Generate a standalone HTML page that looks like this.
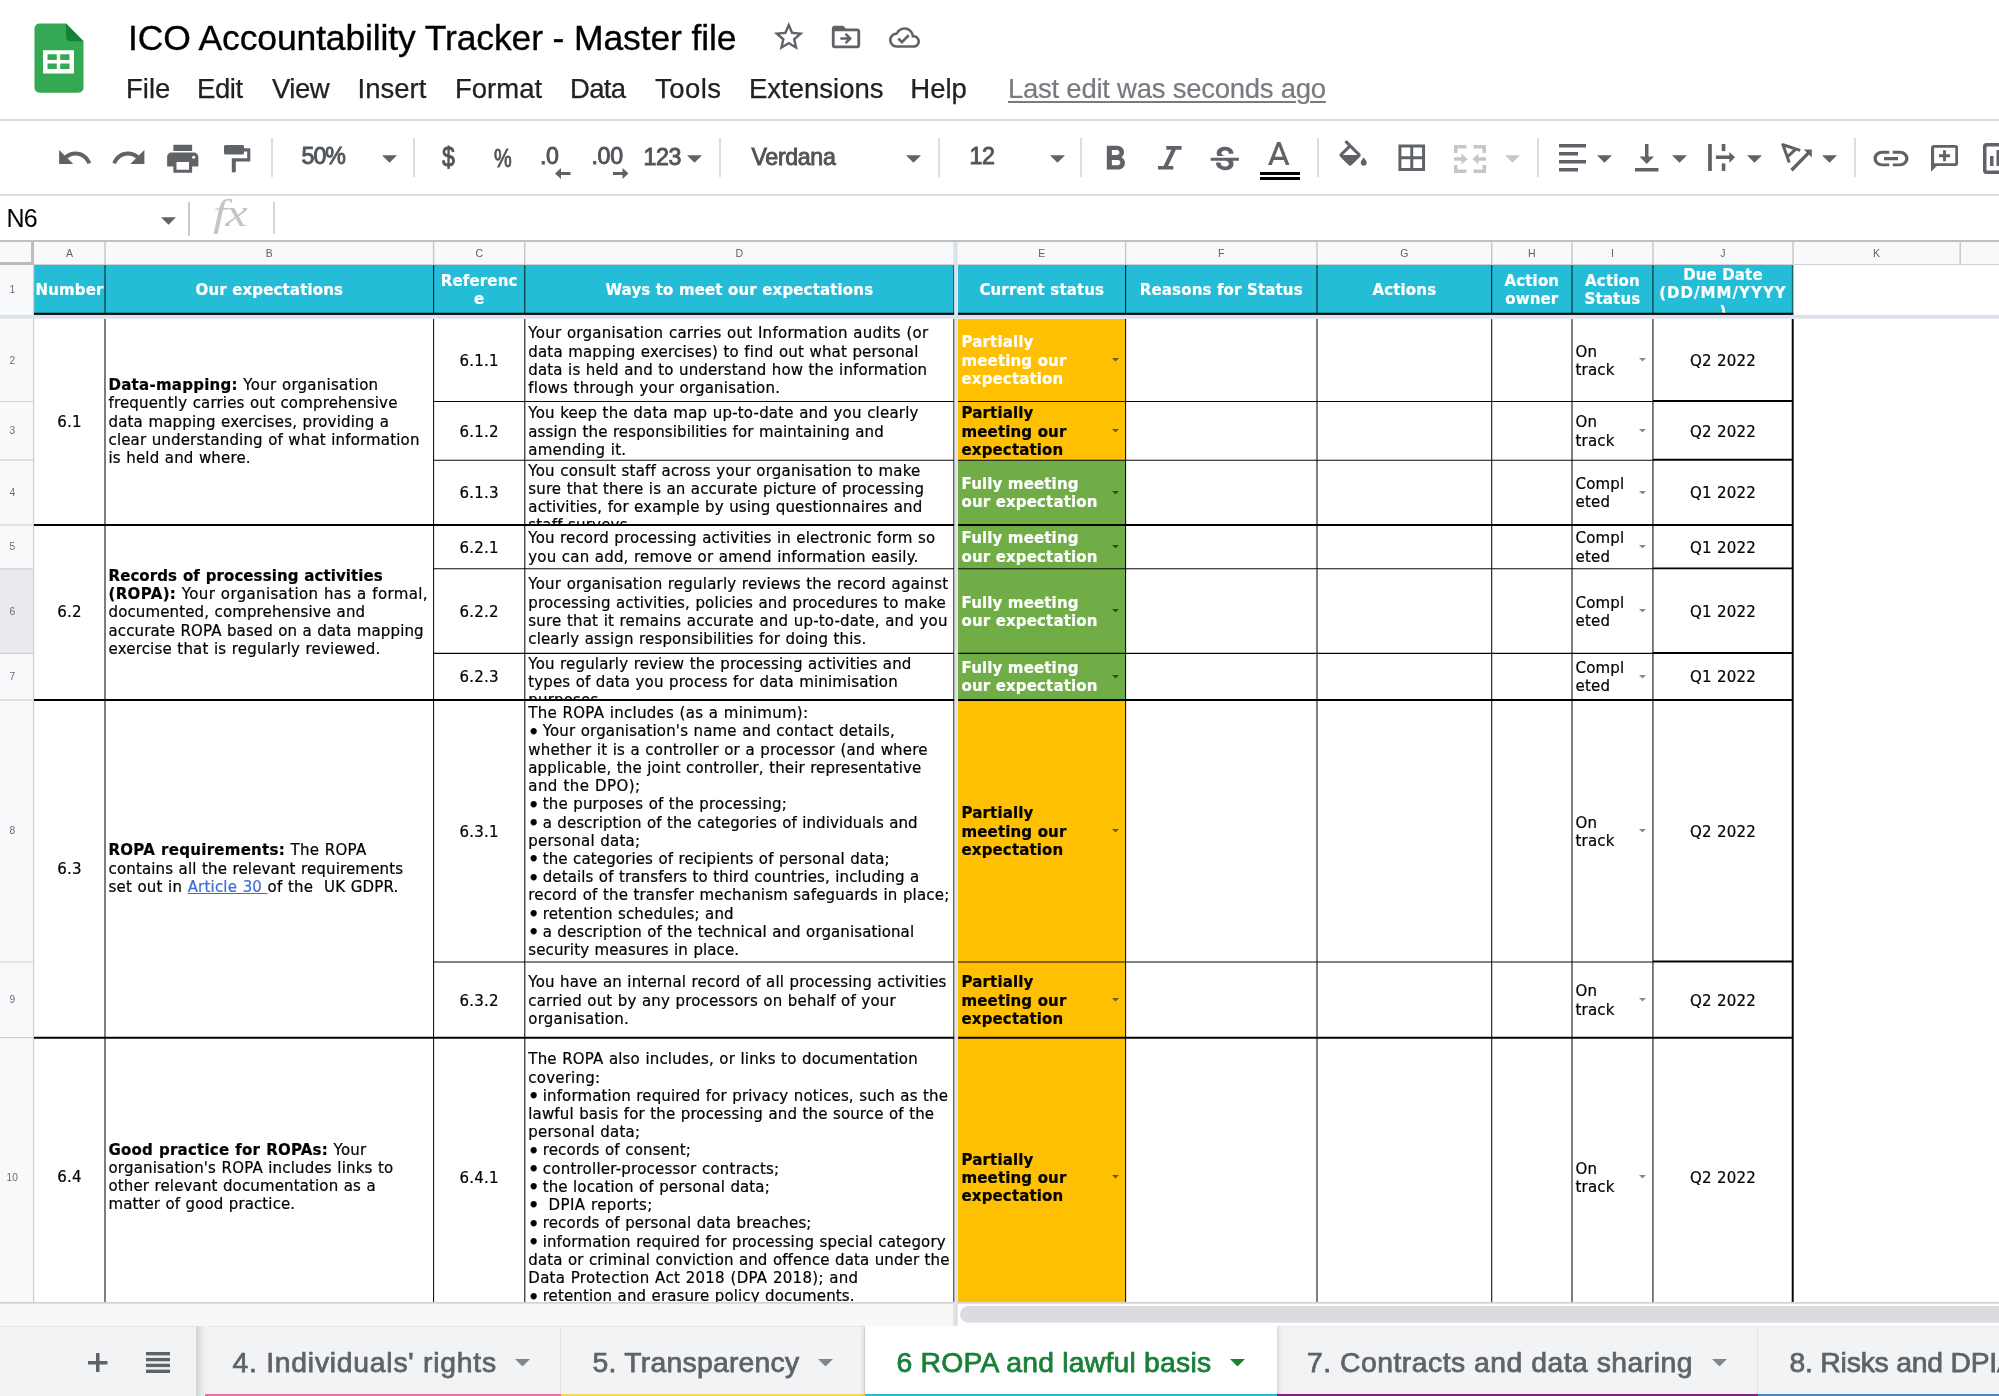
<!DOCTYPE html>
<html lang="en"><head><meta charset="utf-8"><title>ICO Accountability Tracker - Master file</title>
<style>
html,body{margin:0;padding:0}
body{width:1999px;height:1396px;position:relative;overflow:hidden;background:#fff;font-family:"Liberation Sans",sans-serif;color:#000}
div,span,svg{position:absolute;box-sizing:border-box}
.t{white-space:nowrap;line-height:1}
.cell{-webkit-text-stroke:0.22px currentColor;font-family:"DejaVu Sans","Liberation Sans",sans-serif;font-size:15px;line-height:18.23px;overflow:hidden;display:flex;align-items:center}
.cell>p{position:static;margin:0;padding:1.600px 0 0 0;width:100%;white-space:pre;letter-spacing:0.2px;word-spacing:0.3px}
.cell b{letter-spacing:0.15px;word-spacing:0}
.hd>p{letter-spacing:0.15px !important;word-spacing:0 !important}
.np>p{padding-top:0 !important}
.cell b{font-weight:bold}
.fl{word-spacing:0.5px}
.fl b{letter-spacing:inherit !important;word-spacing:inherit !important}
.bl{font-weight:bold;font-size:17px;line-height:10px;letter-spacing:-1.9px;position:relative !important;top:1.300px}
.cell span,.cell a{position:static}
.hd{color:#fff;font-weight:bold;text-align:center;background:#25bcd7}
.c{text-align:center}
.top{align-items:flex-start}
.ch{font-size:10.5px;color:#5f6368;text-align:center;line-height:22px;top:242px;height:22px}
.rh{font-size:10.2px;color:#6a6e73;text-align:center;left:0;width:24.500px;display:flex;align-items:center;justify-content:center}
.rh>span{position:static}
.menu{top:73px;font-size:27.5px;color:#202124;-webkit-text-stroke:0.25px #202124;line-height:32px;white-space:nowrap}
.tb{font-size:23.200px;letter-spacing:-0.350px;color:#50555a;white-space:nowrap;line-height:26px;-webkit-text-stroke:0.9px #50555a}
.sep{width:2px;background:#dadce0;top:138px;height:39px}
.tab{top:1327.200px;height:70px;font-size:28.300px;line-height:70px;white-space:nowrap;color:#5f6368;-webkit-text-stroke:0.75px #5f6368}
</style></head>
<body>
<div id="root" style="left:0;top:0;width:1999px;height:1396px;overflow:hidden;will-change:transform;opacity:0.999">
<svg style="left:33px;top:21.600px;width:52px;height:72.800px" viewBox="0 0 52 72" preserveAspectRatio="none">
<path d="M6.5 1.5H33L50.5 19V65a5 5 0 0 1-5 5H6.500a5 5 0 0 1-5-5V6.500a5 5 0 0 1 5-5z" fill="#34a853"/>
<path d="M33 1.500L50.5 19H37.500a4.500 4.500 0 0 1-4.500-4.500z" fill="#188038"/>
<path d="M10 28h31v23H10zM14.500 32v5.500h9.300V32zm12.700 0v5.500h9.300V32zM14.500 41v5.500h9.300V41zm12.700 0v5.500h9.300V41z" fill="#fff" fill-rule="evenodd"/>
</svg>
<div class="t" id="title" style="left:128px;top:18px;font-size:35.5px;line-height:40px;color:#000;letter-spacing:-0.13px;-webkit-text-stroke:0.35px #000">ICO Accountability Tracker - Master file</div>
<svg style="left:771px;top:19px;width:35.5px;height:35.5px" viewBox="0 0 24 24"><path fill="#5f6368" d="M22 9.24l-7.19-.62L12 2 9.190 8.630 2 9.240l5.460 4.730L5.820 21 12 17.270 18.180 21l-1.630-7.030L22 9.240zM12 15.400l-3.760 2.270 1-4.280-3.320-2.880 4.380-.38L12 6.100l1.710 4.040 4.380.38-3.320 2.880 1 4.280L12 15.400z"/></svg>
<svg style="left:829px;top:19.500px;width:34px;height:34px" viewBox="0 0 24 24"><path fill="#5f6368" d="M20 6h-8l-2-2H4c-1.100 0-2 .9-2 2v12c0 1.100.9 2 2 2h16c1.100 0 2-.9 2-2V8c0-1.100-.9-2-2-2zm0 12H4V8h16v10z"/><path fill="none" stroke="#5f6368" stroke-width="1.800" d="M8 13.050h6.800M11.700 9.800l3.250 3.250-3.250 3.250"/></svg>
<svg style="left:889px;top:21.5px;width:31px;height:31px" viewBox="0 0 24 24"><path fill="#5f6368" d="M19.350 10.040C18.670 6.590 15.640 4 12 4 9.110 4 6.600 5.640 5.350 8.040 2.340 8.360 0 10.910 0 14c0 3.310 2.690 6 6 6h13c2.760 0 5-2.240 5-5 0-2.640-2.050-4.780-4.650-4.960zM19 18H6c-2.210 0-4-1.790-4-4 0-2.050 1.530-3.760 3.560-3.970l1.070-.11.5-.95C8.080 7.140 9.940 6 12 6c2.620 0 4.880 1.860 5.390 4.430l.3 1.500 1.530.11c1.560.1 2.780 1.410 2.780 2.960 0 1.650-1.350 3-3 3zm-9-3.820l-2.090-2.090L6.500 13.500 10 17l6.010-6.010-1.410-1.410z"/></svg>
<div class="menu" id="m0" style="left:126px;letter-spacing:0px">File</div>
<div class="menu" id="m1" style="left:197px;letter-spacing:-0.4px">Edit</div>
<div class="menu" id="m2" style="left:272px;letter-spacing:-0.5px">View</div>
<div class="menu" id="m3" style="left:357.5px;letter-spacing:0px">Insert</div>
<div class="menu" id="m4" style="left:455px;letter-spacing:0px">Format</div>
<div class="menu" id="m5" style="left:570px;letter-spacing:-0.7px">Data</div>
<div class="menu" id="m6" style="left:655px;letter-spacing:0.45px">Tools</div>
<div class="menu" id="m7" style="left:749px;letter-spacing:0px">Extensions</div>
<div class="menu" id="m8" style="left:910.3px;letter-spacing:0px">Help</div>
<div class="menu" id="lastedit" style="left:1008px;color:#777b80;-webkit-text-stroke:0.2px #777b80;letter-spacing:-0.25px;text-decoration:underline #777b80;text-decoration-thickness:2px;text-underline-offset:3px">Last edit was seconds ago</div>
<div style="left:0;top:119px;width:1999px;height:2px;background:#dadce0"></div>
<div style="left:0;top:194px;width:1999px;height:2px;background:#dadce0"></div>
<svg style="left:55.5px;top:139px;width:37.5px;height:37.5px" viewBox="0 0 24 24"><path fill="#5f6368" d="M12.500 8c-2.650 0-5.050.99-6.900 2.600L2 7v9h9l-3.620-3.620c1.390-1.160 3.160-1.880 5.120-1.880 3.540 0 6.550 2.310 7.600 5.500l2.370-.78C21.080 11.030 17.150 8 12.500 8z"/></svg>
<svg style="left:109.8px;top:139px;width:37.5px;height:37.5px" viewBox="0 0 24 24"><path fill="#5f6368" d="M18.400 10.600C16.550 8.990 14.150 8 11.500 8c-4.650 0-8.580 3.030-9.960 7.220L3.900 16c1.050-3.190 4.050-5.500 7.600-5.500 1.950 0 3.730.72 5.120 1.880L13 16h9V7l-3.600 3.600z"/></svg>
<svg style="left:163.5px;top:139.5px;width:37.5px;height:37.5px" viewBox="0 0 24 24"><path fill="#5f6368" d="M19 8H5c-1.660 0-3 1.340-3 3v6h4v4h12v-4h4v-6c0-1.660-1.340-3-3-3zm-3 11H8v-5h8v5zm3-7c-.55 0-1-.45-1-1s.45-1 1-1 1 .45 1 1-.45 1-1 1zm-1-9H6v4h12V3z"/></svg>
<svg style="left:224px;top:145px;width:26.500px;height:27.500px" viewBox="0 0 26.500 27.500"><path fill="#5f6368" d="M1.500 0h17a1.500 1.500 0 0 1 1.500 1.500v1.800h6.300v13.200H11.800v9.500a1.500 1.500 0 0 1-1.500 1.500h-1a1.500 1.500 0 0 1-1.500-1.500V13.300h15.400V6.500H20v1.500a1.500 1.500 0 0 1-1.500 1.500h-17a1.500 1.500 0 0 1-1.500-1.500v-6.500a1.500 1.500 0 0 1 1.500-1.500z"/></svg>
<div class="sep" style="left:270.5px"></div>
<div class="tb" id="zoom" style="left:301.500px;top:143.300px;letter-spacing:-1px">50%</div>
<svg style="left:382px;top:155.2px;width:15px;height:8px" viewBox="0 0 10 5"><path d="M0 0h10L5 5z" fill="#5f6368"/></svg>
<div class="sep" style="left:412.5px"></div>
<div class="tb" id="dollar" style="left:441.500px;top:143.500px;font-size:27.500px;transform:scaleX(0.84);transform-origin:0 0">$</div>
<div class="tb" id="pct" style="left:494.300px;top:144.800px;font-size:25.500px;transform:scaleX(0.78);transform-origin:0 0">%</div>
<div class="tb" id="d0" style="left:540px;top:143px">.0</div>
<svg style="left:555px;top:167.500px;width:15.500px;height:11px" viewBox="0 0 15.500 11"><path d="M15.500 4H6V0L0 5.500 6 11V7h9.500z" fill="#5f6368"/></svg>
<div class="tb" id="d00" style="left:591.500px;top:143px">.00</div>
<svg style="left:612.500px;top:167.500px;width:15.500px;height:11px" viewBox="0 0 15.500 11"><path d="M0 4H9.500V0l6 5.500-6 5.500V7H0z" fill="#5f6368"/></svg>
<div class="tb" id="n123" style="left:643.500px;top:143.500px">123</div>
<svg style="left:687px;top:155.2px;width:15px;height:8px" viewBox="0 0 10 5"><path d="M0 0h10L5 5z" fill="#5f6368"/></svg>
<div class="sep" style="left:719px"></div>
<div class="tb" id="verdana" style="left:751.500px;top:143.500px">Verdana</div>
<svg style="left:905.5px;top:155.2px;width:15px;height:8px" viewBox="0 0 10 5"><path d="M0 0h10L5 5z" fill="#5f6368"/></svg>
<div class="sep" style="left:938px"></div>
<div class="tb" id="n12" style="left:969.500px;top:142.500px">12</div>
<svg style="left:1049.5px;top:155.2px;width:15px;height:8px" viewBox="0 0 10 5"><path d="M0 0h10L5 5z" fill="#5f6368"/></svg>
<div class="sep" style="left:1080px"></div>
<svg style="left:1095.2px;top:139.26px;width:40.5px;height:40.5px" viewBox="0 0 24 24"><path fill="#5f6368" d="M15.600 10.790c.97-.67 1.650-1.770 1.650-2.790 0-2.260-1.750-4-4-4H7v14h7.040c2.090 0 3.710-1.700 3.710-3.790 0-1.520-.86-2.820-2.150-3.420zM10 6.500h3c.83 0 1.500.67 1.500 1.500s-.67 1.500-1.500 1.500h-3v-3zm3.500 9H10v-3h3.500c.83 0 1.500.67 1.500 1.500s-.67 1.500-1.500 1.500z"/></svg>
<svg style="left:1158.400px;top:146px;width:23.600px;height:23.600px" viewBox="0 0 23.600 23.600"><path fill="#5f6368" d="M8.300 0H23.600V3.700H17.900L10.100 19.900H15.300V23.600H0V19.900H5.600L13.400 3.700H8.300z"/></svg>
<svg style="left:1205.5px;top:142.4px;width:37.5px;height:37.5px" viewBox="0 0 24 24"><path fill="#5f6368" d="M7.240 8.750c-.26-.48-.39-1.030-.39-1.670 0-.61.13-1.160.4-1.670.26-.5.630-.93 1.110-1.290.48-.35 1.050-.63 1.700-.83.660-.19 1.390-.29 2.180-.29.810 0 1.540.11 2.210.34.660.22 1.230.54 1.690.94.470.4.830.88 1.080 1.430.25.550.38 1.150.38 1.810h-3.010c0-.31-.05-.59-.15-.85-.09-.27-.24-.49-.44-.68-.2-.19-.45-.33-.75-.44-.3-.1-.66-.16-1.060-.16-.39 0-.74.040-1.030.13-.29.090-.53.210-.72.360-.19.160-.34.340-.44.550-.1.210-.15.430-.15.660 0 .48.250.88.740 1.210.38.250.77.480 1.410.7H7.390c-.05-.08-.11-.17-.15-.25zM21 12v-2H3v2h9.620c.18.070.4.140.55.200.37.170.66.340.87.510.21.170.35.360.43.570.07.200.11.430.11.690 0 .23-.05.450-.14.660-.09.200-.23.380-.42.530-.19.150-.42.260-.71.350-.29.080-.63.130-1.010.13-.43 0-.83-.04-1.180-.13s-.66-.23-.91-.42c-.25-.19-.45-.44-.59-.75-.14-.31-.25-.76-.25-1.210H6.400c0 .55.080 1.130.24 1.580.16.450.37.850.65 1.210.28.350.6.660.98.920.37.260.78.480 1.220.65.440.17.900.3 1.380.39.480.08.960.13 1.440.13.800 0 1.530-.09 2.180-.28s1.210-.45 1.670-.79c.46-.34.820-.77 1.070-1.270s.38-1.070.38-1.710c0-.6-.1-1.140-.31-1.610-.05-.11-.11-.23-.17-.33H21z"/></svg>
<svg style="left:1258.9px;top:137.1px;width:39.6px;height:39.6px" viewBox="0 0 24 24"><path fill="#5f6368" d="M11 3L5.500 17h2.250l1.120-3h6.250l1.120 3h2.250L13 3h-2zm-1.380 9L12 5.670 14.380 12H9.620z"/></svg>
<div style="left:1259.500px;top:172.300px;width:40.500px;height:8px;background:#000"></div>
<div style="left:1259.500px;top:175.400px;width:40.500px;height:1.800px;background:#fff"></div>
<div class="sep" style="left:1316.5px"></div>
<svg style="left:1335.4px;top:140px;width:36.3px;height:36.3px" viewBox="0 0 24 24"><path fill="#5f6368" d="M16.560 8.940L7.620 0 6.210 1.410l2.380 2.380-5.150 5.150c-.59.590-.59 1.540 0 2.120l5.500 5.500c.29.290.68.440 1.060.44s.77-.15 1.060-.44l5.500-5.500c.59-.58.590-1.530 0-2.120zM5.210 10L10 5.210 14.790 10H5.210zM19 11.500s-2 2.170-2 3.500c0 1.100.9 2 2 2s2-.9 2-2c0-1.330-2-3.500-2-3.500z"/></svg>
<svg style="left:1393.6px;top:139.6px;width:35.5px;height:35.5px" viewBox="0 0 24 24"><path fill="#5f6368" d="M3 3v18h18V3H3zm8 16H5v-6h6v6zm0-8H5V5h6v6zm8 8h-6v-6h6v6zm0-8h-6V5h6v6z"/></svg>
<svg style="left:1454px;top:144.500px;width:32px;height:28px" viewBox="0 0 32 28"><g fill="#c4c7ca">
<path d="M0 0h12.500v3.500H3.500V8H0zM19.500 0H32v8h-3.500V3.500h-9zM0 20h3.500v4.500h9V28H0zM28.500 20H32v8H19.500v-3.500h9z"/>
<path d="M0 12.300h7.500V8.500l6 5.500-6 5.500v-3.800H0zM32 12.300h-7.500V8.500l-6 5.500 6 5.500v-3.800H32z"/></g></svg>
<svg style="left:1504.5px;top:155.2px;width:15px;height:8px" viewBox="0 0 10 5"><path d="M0 0h10L5 5z" fill="#c4c7ca"/></svg>
<div class="sep" style="left:1537px"></div>
<svg style="left:1558.500px;top:144px;width:27px;height:27.500px" viewBox="0 0 27 27.500"><g fill="#5f6368"><rect x="0" y="0" width="27" height="3.500"/><rect x="0" y="8" width="19" height="3.500"/><rect x="0" y="16" width="27" height="3.500"/><rect x="0" y="24" width="19" height="3.500"/></g></svg>
<svg style="left:1597px;top:155.2px;width:15px;height:8px" viewBox="0 0 10 5"><path d="M0 0h10L5 5z" fill="#5f6368"/></svg>
<svg style="left:1635px;top:144px;width:23.500px;height:27.500px" viewBox="0 0 23.500 27.500"><g fill="#5f6368"><rect x="0" y="24" width="23.500" height="3.500"/><path d="M10 0h3.500v12.500h5.500L11.750 20 4.500 12.500H10z"/></g></svg>
<svg style="left:1672px;top:155.2px;width:15px;height:8px" viewBox="0 0 10 5"><path d="M0 0h10L5 5z" fill="#5f6368"/></svg>
<svg style="left:1708px;top:144px;width:27.500px;height:27.500px" viewBox="0 0 27.500 27.500"><g fill="#5f6368"><rect x="0.100" y="0" width="3.750" height="26.900"/><rect x="13.750" y="0" width="3.600" height="7.100"/><rect x="13.750" y="19.400" width="3.600" height="7.500"/><path d="M7.900 11.600h13.400V7.900l5.800 5.400-5.800 5.450V15H7.900z"/></g></svg>
<svg style="left:1746.5px;top:155.2px;width:15px;height:8px" viewBox="0 0 10 5"><path d="M0 0h10L5 5z" fill="#5f6368"/></svg>
<svg style="left:1781px;top:142px;width:32px;height:31px" viewBox="0 0 32 31"><g fill="none" stroke="#5f6368" stroke-width="3" stroke-linejoin="round" stroke-linecap="butt"><path d="M8.300 20.400L1.900 2.750 19.200 8.400M6.400 14.800l7.900-7.200"/><path d="M10.500 28.300L28 10.400" stroke-width="3.400"/></g><path d="M22.800 7.600h8v8z" fill="#5f6368"/></svg>
<svg style="left:1821.5px;top:155.2px;width:15px;height:8px" viewBox="0 0 10 5"><path d="M0 0h10L5 5z" fill="#5f6368"/></svg>
<div class="sep" style="left:1854px"></div>
<svg style="left:1869.500px;top:139.650px;width:42px;height:37.200px" viewBox="0 0 24 24" preserveAspectRatio="none"><path fill="#5f6368" d="M3.900 12c0-1.710 1.390-3.100 3.100-3.100h4V7H7c-2.760 0-5 2.240-5 5s2.240 5 5 5h4v-1.900H7c-1.710 0-3.100-1.390-3.100-3.100zM8 13h8v-2H8v2zm9-6h-4v1.900h4c1.710 0 3.100 1.390 3.100 3.100s-1.390 3.100-3.100 3.100h-4V17h4c2.760 0 5-2.240 5-5s-2.240-5-5-5z"/></svg>
<svg style="left:1930.800px;top:144.800px;width:27.200px;height:26.800px" viewBox="0 0 28 28" preserveAspectRatio="none"><path fill="#5f6368" fill-rule="evenodd" d="M3 0h22a3 3 0 0 1 3 3v16a3 3 0 0 1-3 3H6l-6 6V3a3 3 0 0 1 3-3zm0.200 3v16H25V3zM12.400 5.500h3v4.200h4.200v3h-4.200v4.200h-3v-4.200H8.200v-3h4.200z"/></svg>
<svg style="left:1982.500px;top:143px;width:31px;height:31px" viewBox="0 0 31 31"><path fill="#5f6368" fill-rule="evenodd" d="M3.500 0h24a3.500 3.500 0 0 1 3.500 3.500v24a3.500 3.500 0 0 1-3.500 3.500h-24a3.500 3.500 0 0 1-3.500-3.500v-24a3.500 3.500 0 0 1 3.500-3.500zm0 3.500v24h24v-24zM7 13h3.500v10H7zm6.500-6h3.500v16h-3.500zm6.500 9h3.500v7H20z"/></svg>
<div class="t" id="namebox" style="left:6.500px;top:204px;font-size:25px;line-height:28px;color:#000;letter-spacing:-0.8px">N6</div>
<svg style="left:161.3px;top:216.8px;width:15px;height:8px" viewBox="0 0 10 5"><path d="M0 0h10L5 5z" fill="#5f6368"/></svg>
<div style="left:188px;top:202px;width:2px;height:34px;background:#c9cbcd"></div>
<div class="t" id="fx" style="left:213px;top:192px;font-family:'Liberation Serif',serif;font-style:italic;font-size:37.500px;line-height:44px;color:#c2c4c7;letter-spacing:-1px;transform:scaleX(1.33);transform-origin:0 0">fx</div>
<div style="left:272.500px;top:202px;width:2px;height:32px;background:#d2d4d6"></div>
<div style="left:0;top:240px;width:1999px;height:2px;background:#c0c0c0"></div>
<div style="left:0;top:242px;width:1999px;height:22.500px;background:#f8f9fa"></div>
<div style="left:0;top:264px;width:33.500px;height:1038px;background:#f8f9fa"></div>
<div style="left:0;top:568.8px;width:33.500px;height:84.55000000000007px;background:#e8eaed"></div>
<div style="left:0;top:242px;width:34px;height:23px;background:#f8f9fa;border-right:3.500px solid #bcbcbc;border-bottom:3.500px solid #bcbcbc"></div>
<div class="ch" style="left:34.0px;width:71.0px">A</div>
<div class="ch" style="left:105.0px;width:328.6px">B</div>
<div class="ch" style="left:433.6px;width:91.19999999999993px">C</div>
<div class="ch" style="left:524.8px;width:429.1px">D</div>
<div class="ch" style="left:958.0px;width:167.5999999999999px">E</div>
<div class="ch" style="left:1125.6px;width:191.4000000000001px">F</div>
<div class="ch" style="left:1317.0px;width:174.70000000000005px">G</div>
<div class="ch" style="left:1491.7px;width:80.29999999999995px">H</div>
<div class="ch" style="left:1572.0px;width:80.95000000000005px">I</div>
<div class="ch" style="left:1652.95px;width:140.04999999999995px">J</div>
<div class="ch" style="left:1793.0px;width:167.20000000000005px">K</div>
<div class="rh" style="top:264.5px;height:49.30000000000001px"><span>1</span></div>
<div class="rh" style="top:318.5px;height:83.0px"><span>2</span></div>
<div class="rh" style="top:401.5px;height:58.69999999999999px"><span>3</span></div>
<div class="rh" style="top:460.2px;height:64.80000000000001px"><span>4</span></div>
<div class="rh" style="top:525.0px;height:43.799999999999955px"><span>5</span></div>
<div class="rh" style="top:568.8px;height:84.55000000000007px"><span>6</span></div>
<div class="rh" style="top:653.35px;height:46.549999999999955px"><span>7</span></div>
<div class="rh" style="top:699.9px;height:262.1px"><span>8</span></div>
<div class="rh" style="top:962.0px;height:75.70000000000005px"><span>9</span></div>
<div class="rh" style="top:1037.7px;height:278.89999999999986px"><span>10</span></div>
<div class="cell hd " style="left:34.0px;top:264.5px;width:71.0px;height:49.900000000000034px;padding:0 0px;"><p>Number</p></div>
<div class="cell hd " style="left:105.0px;top:264.5px;width:328.6px;height:49.900000000000034px;padding:0 0px;"><p>Our expectations</p></div>
<div class="cell hd " style="left:433.6px;top:264.5px;width:91.19999999999993px;height:49.900000000000034px;padding:0 0px;"><p>Referenc
e</p></div>
<div class="cell hd " style="left:524.8px;top:264.5px;width:429.1px;height:49.900000000000034px;padding:0 0px;"><p>Ways to meet our expectations</p></div>
<div class="cell hd " style="left:958.0px;top:264.5px;width:167.5999999999999px;height:49.900000000000034px;padding:0 0px;"><p>Current status</p></div>
<div class="cell hd " style="left:1125.6px;top:264.5px;width:191.4000000000001px;height:49.900000000000034px;padding:0 0px;"><p>Reasons for Status</p></div>
<div class="cell hd " style="left:1317.0px;top:264.5px;width:174.70000000000005px;height:49.900000000000034px;padding:0 0px;"><p>Actions</p></div>
<div class="cell hd " style="left:1491.7px;top:264.5px;width:80.29999999999995px;height:49.900000000000034px;padding:0 0px;"><p>Action
owner</p></div>
<div class="cell hd " style="left:1572.0px;top:264.5px;width:80.95000000000005px;height:49.900000000000034px;padding:0 0px;"><p>Action
Status</p></div>
<div class="cell hd top" style="left:1652.95px;top:264.5px;width:140.04999999999995px;height:49.900000000000034px;padding:0 0px;"><p>Due Date
<span style="letter-spacing:1.050px">(DD/MM/YYYY</span>
)</p></div>
<div class="cell c np" style="left:34.0px;top:318.5px;width:71.0px;height:206.5px;padding:0 3.5px;"><p>6.1</p></div>
<div class="cell c np" style="left:34.0px;top:525.0px;width:71.0px;height:174.89999999999998px;padding:0 3.5px;"><p>6.2</p></div>
<div class="cell c np" style="left:34.0px;top:699.9px;width:71.0px;height:337.80000000000007px;padding:0 3.5px;"><p>6.3</p></div>
<div class="cell c np" style="left:34.0px;top:1037.7px;width:71.0px;height:278.89999999999986px;padding:0 3.5px;"><p>6.4</p></div>
<div class="cell np" style="left:105.0px;top:318.5px;width:328.6px;height:206.5px;padding:0 3.5px;"><p><span class="fl" style="letter-spacing:0.265px"><b>Data-mapping:</b> Your organisation</span>
<span class="fl" style="letter-spacing:0.166px">frequently carries out comprehensive</span>
<span class="fl" style="letter-spacing:0.165px">data mapping exercises, providing a</span>
<span class="fl" style="letter-spacing:0.155px">clear understanding of what information</span>
<span class="fl" style="letter-spacing:0.166px">is held and where.</span></p></div>
<div class="cell np" style="left:105.0px;top:525.0px;width:328.6px;height:174.89999999999998px;padding:0 3.5px;"><p><span class="fl" style="letter-spacing:0.085px"><b>Records of processing activities</b></span>
<span class="fl" style="letter-spacing:0.352px"><b>(ROPA):</b> Your organisation has a formal,</span>
<span class="fl" style="letter-spacing:0.131px">documented, comprehensive and</span>
<span class="fl" style="letter-spacing:0.118px">accurate ROPA based on a data mapping</span>
<span class="fl" style="letter-spacing:0.185px">exercise that is regularly reviewed.</span></p></div>
<div class="cell np" style="left:105.0px;top:699.9px;width:328.6px;height:337.80000000000007px;padding:0 3.5px;"><p><span class="fl" style="letter-spacing:0.275px"><b>ROPA requirements:</b> The ROPA</span>
<span class="fl" style="letter-spacing:0.149px">contains all the relevant requirements</span>
<span class="fl" style="letter-spacing:0.198px">set out in <a style="color:#3c6fd6;text-decoration:underline">Article 30 </a>of the  UK GDPR.</span></p></div>
<div class="cell np" style="left:105.0px;top:1037.7px;width:328.6px;height:278.89999999999986px;padding:0 3.5px;"><p><span class="fl" style="letter-spacing:0.227px"><b>Good practice for ROPAs:</b> Your</span>
<span class="fl" style="letter-spacing:0.176px">organisation's ROPA includes links to</span>
<span class="fl" style="letter-spacing:0.135px">other relevant documentation as a</span>
<span class="fl" style="letter-spacing:0.111px">matter of good practice.</span></p></div>
<div class="cell c" style="left:433.6px;top:318.5px;width:91.19999999999993px;height:83.0px;padding:0 3.5px;"><p>6.1.1</p></div>
<div class="cell " style="left:524.8px;top:318.5px;width:429.1px;height:83.0px;padding:0 3.5px;"><p><span class="fl" style="letter-spacing:0.268px">Your organisation carries out Information audits (or</span>
<span class="fl" style="letter-spacing:0.168px">data mapping exercises) to find out what personal</span>
<span class="fl" style="letter-spacing:0.147px">data is held and to understand how the information</span>
<span class="fl" style="letter-spacing:0.211px">flows through your organisation.</span></p></div>
<div class="cell " style="left:958.0px;top:318.5px;width:167.5999999999999px;height:83.0px;padding:0 3.5px;background:#ffc000;color:#fff;padding-right:22px"><p><b>Partially
meeting our
expectation</b></p></div>
<svg style="left:1111.8px;top:358.3px;width:7px;height:3.600px" viewBox="0 0 7 3.600"><path d="M0 0h7L3.500 3.600z" fill="#6b5a1c"/></svg>
<div class="cell " style="left:1572.0px;top:318.5px;width:80.95000000000005px;height:83.0px;padding:0 3.5px;padding-right:20px"><p>On
track</p></div>
<svg style="left:1639.0px;top:358.3px;width:7px;height:3.600px" viewBox="0 0 7 3.600"><path d="M0 0h7L3.500 3.600z" fill="#8a8a8a"/></svg>
<div class="cell c" style="left:1652.95px;top:318.5px;width:140.04999999999995px;height:83.0px;padding:0 3.5px;"><p>Q2 2022</p></div>
<div class="cell c" style="left:433.6px;top:401.5px;width:91.19999999999993px;height:58.69999999999999px;padding:0 3.5px;"><p>6.1.2</p></div>
<div class="cell " style="left:524.8px;top:401.5px;width:429.1px;height:58.69999999999999px;padding:0 3.5px;"><p><span class="fl" style="letter-spacing:0.200px">You keep the data map up-to-date and you clearly</span>
<span class="fl" style="letter-spacing:0.130px">assign the responsibilities for maintaining and</span>
<span class="fl" style="letter-spacing:0.214px">amending it.</span></p></div>
<div class="cell " style="left:958.0px;top:401.5px;width:167.5999999999999px;height:58.69999999999999px;padding:0 3.5px;background:#ffc000;color:#000;padding-right:22px"><p><b>Partially
meeting our
expectation</b></p></div>
<svg style="left:1111.8px;top:429.15000000000003px;width:7px;height:3.600px" viewBox="0 0 7 3.600"><path d="M0 0h7L3.500 3.600z" fill="#6b5a1c"/></svg>
<div class="cell " style="left:1572.0px;top:401.5px;width:80.95000000000005px;height:58.69999999999999px;padding:0 3.5px;padding-right:20px"><p>On
track</p></div>
<svg style="left:1639.0px;top:429.15000000000003px;width:7px;height:3.600px" viewBox="0 0 7 3.600"><path d="M0 0h7L3.500 3.600z" fill="#8a8a8a"/></svg>
<div class="cell c" style="left:1652.95px;top:401.5px;width:140.04999999999995px;height:58.69999999999999px;padding:0 3.5px;"><p>Q2 2022</p></div>
<div class="cell c" style="left:433.6px;top:460.2px;width:91.19999999999993px;height:64.80000000000001px;padding:0 3.5px;"><p>6.1.3</p></div>
<div class="cell top" style="left:524.8px;top:460.2px;width:429.1px;height:64.80000000000001px;padding:0 3.5px;"><p><span class="fl" style="letter-spacing:0.210px">You consult staff across your organisation to make</span>
<span class="fl" style="letter-spacing:0.137px">sure that there is an accurate picture of processing</span>
<span class="fl" style="letter-spacing:0.140px">activities, for example by using questionnaires and</span>
<span class="fl" style="letter-spacing:0.180px">staff surveys.</span></p></div>
<div class="cell " style="left:958.0px;top:460.2px;width:167.5999999999999px;height:64.80000000000001px;padding:0 3.5px;background:#70ad47;color:#fff;padding-right:22px"><p><b>Fully meeting
our expectation</b></p></div>
<svg style="left:1111.8px;top:490.90000000000003px;width:7px;height:3.600px" viewBox="0 0 7 3.600"><path d="M0 0h7L3.500 3.600z" fill="#2f4f25"/></svg>
<div class="cell " style="left:1572.0px;top:460.2px;width:80.95000000000005px;height:64.80000000000001px;padding:0 3.5px;padding-right:20px"><p>Compl
eted</p></div>
<svg style="left:1639.0px;top:490.90000000000003px;width:7px;height:3.600px" viewBox="0 0 7 3.600"><path d="M0 0h7L3.500 3.600z" fill="#8a8a8a"/></svg>
<div class="cell c" style="left:1652.95px;top:460.2px;width:140.04999999999995px;height:64.80000000000001px;padding:0 3.5px;"><p>Q1 2022</p></div>
<div class="cell c" style="left:433.6px;top:525.0px;width:91.19999999999993px;height:43.799999999999955px;padding:0 3.5px;"><p>6.2.1</p></div>
<div class="cell " style="left:524.8px;top:525.0px;width:429.1px;height:43.799999999999955px;padding:0 3.5px;"><p><span class="fl" style="letter-spacing:0.160px">You record processing activities in electronic form so</span>
<span class="fl" style="letter-spacing:0.185px">you can add, remove or amend information easily.</span></p></div>
<div class="cell " style="left:958.0px;top:525.0px;width:167.5999999999999px;height:43.799999999999955px;padding:0 3.5px;background:#70ad47;color:#fff;padding-right:22px"><p><b>Fully meeting
our expectation</b></p></div>
<svg style="left:1111.8px;top:545.1999999999999px;width:7px;height:3.600px" viewBox="0 0 7 3.600"><path d="M0 0h7L3.500 3.600z" fill="#2f4f25"/></svg>
<div class="cell " style="left:1572.0px;top:525.0px;width:80.95000000000005px;height:43.799999999999955px;padding:0 3.5px;padding-right:20px"><p>Compl
eted</p></div>
<svg style="left:1639.0px;top:545.1999999999999px;width:7px;height:3.600px" viewBox="0 0 7 3.600"><path d="M0 0h7L3.500 3.600z" fill="#8a8a8a"/></svg>
<div class="cell c" style="left:1652.95px;top:525.0px;width:140.04999999999995px;height:43.799999999999955px;padding:0 3.5px;"><p>Q1 2022</p></div>
<div class="cell c" style="left:433.6px;top:568.8px;width:91.19999999999993px;height:84.55000000000007px;padding:0 3.5px;"><p>6.2.2</p></div>
<div class="cell " style="left:524.8px;top:568.8px;width:429.1px;height:84.55000000000007px;padding:0 3.5px;"><p><span class="fl" style="letter-spacing:0.209px">Your organisation regularly reviews the record against</span>
<span class="fl" style="letter-spacing:0.145px">processing activities, policies and procedures to make</span>
<span class="fl" style="letter-spacing:0.197px">sure that it remains accurate and up-to-date, and you</span>
<span class="fl" style="letter-spacing:0.145px">clearly assign responsibilities for doing this.</span></p></div>
<div class="cell " style="left:958.0px;top:568.8px;width:167.5999999999999px;height:84.55000000000007px;padding:0 3.5px;background:#70ad47;color:#fff;padding-right:22px"><p><b>Fully meeting
our expectation</b></p></div>
<svg style="left:1111.8px;top:609.375px;width:7px;height:3.600px" viewBox="0 0 7 3.600"><path d="M0 0h7L3.500 3.600z" fill="#2f4f25"/></svg>
<div class="cell " style="left:1572.0px;top:568.8px;width:80.95000000000005px;height:84.55000000000007px;padding:0 3.5px;padding-right:20px"><p>Compl
eted</p></div>
<svg style="left:1639.0px;top:609.375px;width:7px;height:3.600px" viewBox="0 0 7 3.600"><path d="M0 0h7L3.500 3.600z" fill="#8a8a8a"/></svg>
<div class="cell c" style="left:1652.95px;top:568.8px;width:140.04999999999995px;height:84.55000000000007px;padding:0 3.5px;"><p>Q1 2022</p></div>
<div class="cell c" style="left:433.6px;top:653.35px;width:91.19999999999993px;height:46.549999999999955px;padding:0 3.5px;"><p>6.2.3</p></div>
<div class="cell top" style="left:524.8px;top:653.35px;width:429.1px;height:46.549999999999955px;padding:0 3.5px;"><p><span class="fl" style="letter-spacing:0.164px">You regularly review the processing activities and</span>
<span class="fl" style="letter-spacing:0.138px">types of data you process for data minimisation</span>
<span class="fl" style="letter-spacing:0.180px">purposes.</span></p></div>
<div class="cell " style="left:958.0px;top:653.35px;width:167.5999999999999px;height:46.549999999999955px;padding:0 3.5px;background:#70ad47;color:#fff;padding-right:22px"><p><b>Fully meeting
our expectation</b></p></div>
<svg style="left:1111.8px;top:674.925px;width:7px;height:3.600px" viewBox="0 0 7 3.600"><path d="M0 0h7L3.500 3.600z" fill="#2f4f25"/></svg>
<div class="cell " style="left:1572.0px;top:653.35px;width:80.95000000000005px;height:46.549999999999955px;padding:0 3.5px;padding-right:20px"><p>Compl
eted</p></div>
<svg style="left:1639.0px;top:674.925px;width:7px;height:3.600px" viewBox="0 0 7 3.600"><path d="M0 0h7L3.500 3.600z" fill="#8a8a8a"/></svg>
<div class="cell c" style="left:1652.95px;top:653.35px;width:140.04999999999995px;height:46.549999999999955px;padding:0 3.5px;"><p>Q1 2022</p></div>
<div class="cell c" style="left:433.6px;top:699.9px;width:91.19999999999993px;height:262.1px;padding:0 3.5px;"><p>6.3.1</p></div>
<div class="cell " style="left:524.8px;top:699.9px;width:429.1px;height:262.1px;padding:0 3.5px;"><p><span class="fl" style="letter-spacing:0.268px">The ROPA includes (as a minimum):</span>
<span class="fl" style="letter-spacing:0.157px"><span class="bl">•</span> Your organisation's name and contact details,</span>
<span class="fl" style="letter-spacing:0.187px">whether it is a controller or a processor (and where</span>
<span class="fl" style="letter-spacing:0.125px">applicable, the joint controller, their representative</span>
<span class="fl" style="letter-spacing:0.418px">and the DPO);</span>
<span class="fl" style="letter-spacing:0.158px"><span class="bl">•</span> the purposes of the processing;</span>
<span class="fl" style="letter-spacing:0.092px"><span class="bl">•</span> a description of the categories of individuals and</span>
<span class="fl" style="letter-spacing:0.216px">personal data;</span>
<span class="fl" style="letter-spacing:0.131px"><span class="bl">•</span> the categories of recipients of personal data;</span>
<span class="fl" style="letter-spacing:0.122px"><span class="bl">•</span> details of transfers to third countries, including a</span>
<span class="fl" style="letter-spacing:0.170px">record of the transfer mechanism safeguards in place;</span>
<span class="fl" style="letter-spacing:0.160px"><span class="bl">•</span> retention schedules; and</span>
<span class="fl" style="letter-spacing:0.109px"><span class="bl">•</span> a description of the technical and organisational</span>
<span class="fl" style="letter-spacing:0.118px">security measures in place.</span></p></div>
<div class="cell " style="left:958.0px;top:699.9px;width:167.5999999999999px;height:262.1px;padding:0 3.5px;background:#ffc000;color:#000;padding-right:22px"><p><b>Partially
meeting our
expectation</b></p></div>
<svg style="left:1111.8px;top:829.25px;width:7px;height:3.600px" viewBox="0 0 7 3.600"><path d="M0 0h7L3.500 3.600z" fill="#6b5a1c"/></svg>
<div class="cell " style="left:1572.0px;top:699.9px;width:80.95000000000005px;height:262.1px;padding:0 3.5px;padding-right:20px"><p>On
track</p></div>
<svg style="left:1639.0px;top:829.25px;width:7px;height:3.600px" viewBox="0 0 7 3.600"><path d="M0 0h7L3.500 3.600z" fill="#8a8a8a"/></svg>
<div class="cell c" style="left:1652.95px;top:699.9px;width:140.04999999999995px;height:262.1px;padding:0 3.5px;"><p>Q2 2022</p></div>
<div class="cell c" style="left:433.6px;top:962.0px;width:91.19999999999993px;height:75.70000000000005px;padding:0 3.5px;"><p>6.3.2</p></div>
<div class="cell " style="left:524.8px;top:962.0px;width:429.1px;height:75.70000000000005px;padding:0 3.5px;"><p><span class="fl" style="letter-spacing:0.158px">You have an internal record of all processing activities</span>
<span class="fl" style="letter-spacing:0.165px">carried out by any processors on behalf of your</span>
<span class="fl" style="letter-spacing:0.210px">organisation.</span></p></div>
<div class="cell " style="left:958.0px;top:962.0px;width:167.5999999999999px;height:75.70000000000005px;padding:0 3.5px;background:#ffc000;color:#000;padding-right:22px"><p><b>Partially
meeting our
expectation</b></p></div>
<svg style="left:1111.8px;top:998.15px;width:7px;height:3.600px" viewBox="0 0 7 3.600"><path d="M0 0h7L3.500 3.600z" fill="#6b5a1c"/></svg>
<div class="cell " style="left:1572.0px;top:962.0px;width:80.95000000000005px;height:75.70000000000005px;padding:0 3.5px;padding-right:20px"><p>On
track</p></div>
<svg style="left:1639.0px;top:998.15px;width:7px;height:3.600px" viewBox="0 0 7 3.600"><path d="M0 0h7L3.500 3.600z" fill="#8a8a8a"/></svg>
<div class="cell c" style="left:1652.95px;top:962.0px;width:140.04999999999995px;height:75.70000000000005px;padding:0 3.5px;"><p>Q2 2022</p></div>
<div class="cell c" style="left:433.6px;top:1037.7px;width:91.19999999999993px;height:278.89999999999986px;padding:0 3.5px;"><p>6.4.1</p></div>
<div class="cell " style="left:524.8px;top:1037.7px;width:429.1px;height:278.89999999999986px;padding:0 3.5px;"><p><span class="fl" style="letter-spacing:0.175px">The ROPA also includes, or links to documentation</span>
<span class="fl" style="letter-spacing:0.218px">covering:</span>
<span class="fl" style="letter-spacing:0.150px"><span class="bl">•</span> information required for privacy notices, such as the</span>
<span class="fl" style="letter-spacing:0.144px">lawful basis for the processing and the source of the</span>
<span class="fl" style="letter-spacing:0.216px">personal data;</span>
<span class="fl" style="letter-spacing:0.165px"><span class="bl">•</span> records of consent;</span>
<span class="fl" style="letter-spacing:0.232px"><span class="bl">•</span> controller-processor contracts;</span>
<span class="fl" style="letter-spacing:0.131px"><span class="bl">•</span> the location of personal data;</span>
<span class="fl" style="letter-spacing:0.370px"><span class="bl">•</span>  DPIA reports;</span>
<span class="fl" style="letter-spacing:0.160px"><span class="bl">•</span> records of personal data breaches;</span>
<span class="fl" style="letter-spacing:0.138px"><span class="bl">•</span> information required for processing special category</span>
<span class="fl" style="letter-spacing:0.116px">data or criminal conviction and offence data under the</span>
<span class="fl" style="letter-spacing:0.285px">Data Protection Act 2018 (DPA 2018); and</span>
<span class="fl" style="letter-spacing:0.124px"><span class="bl">•</span> retention and erasure policy documents.</span></p></div>
<div class="cell " style="left:958.0px;top:1037.7px;width:167.5999999999999px;height:278.89999999999986px;padding:0 3.5px;background:#ffc000;color:#000;padding-right:22px"><p><b>Partially
meeting our
expectation</b></p></div>
<svg style="left:1111.8px;top:1175.45px;width:7px;height:3.600px" viewBox="0 0 7 3.600"><path d="M0 0h7L3.500 3.600z" fill="#6b5a1c"/></svg>
<div class="cell " style="left:1572.0px;top:1037.7px;width:80.95000000000005px;height:278.89999999999986px;padding:0 3.5px;padding-right:20px"><p>On
track</p></div>
<svg style="left:1639.0px;top:1175.45px;width:7px;height:3.600px" viewBox="0 0 7 3.600"><path d="M0 0h7L3.500 3.600z" fill="#8a8a8a"/></svg>
<div class="cell c" style="left:1652.95px;top:1037.7px;width:140.04999999999995px;height:278.89999999999986px;padding:0 3.5px;"><p>Q2 2022</p></div>
<svg style="left:0;top:0;width:1999px;height:1302px" viewBox="0 0 1999 1302">
<path d="M105.0 242L105.0 264" stroke="#c8c8c8" stroke-width="1.5"/>
<path d="M433.6 242L433.6 264" stroke="#c8c8c8" stroke-width="1.5"/>
<path d="M524.8 242L524.8 264" stroke="#c8c8c8" stroke-width="1.5"/>
<path d="M1125.6 242L1125.6 264" stroke="#c8c8c8" stroke-width="1.5"/>
<path d="M1317.0 242L1317.0 264" stroke="#c8c8c8" stroke-width="1.5"/>
<path d="M1491.7 242L1491.7 264" stroke="#c8c8c8" stroke-width="1.5"/>
<path d="M1572.0 242L1572.0 264" stroke="#c8c8c8" stroke-width="1.5"/>
<path d="M1652.95 242L1652.95 264" stroke="#c8c8c8" stroke-width="1.5"/>
<path d="M1793.0 242L1793.0 264" stroke="#c8c8c8" stroke-width="1.5"/>
<path d="M1960.2 242L1960.2 264" stroke="#c8c8c8" stroke-width="1.5"/>
<path d="M34 264.5L1999 264.5" stroke="#d0d0d0" stroke-width="1.2"/>
<path d="M33.6 265L33.6 1302" stroke="#d0d0d0" stroke-width="1.3"/>
<path d="M0 401.5L33.5 401.5" stroke="#d0d0d0" stroke-width="1.2"/>
<path d="M0 460.2L33.5 460.2" stroke="#d0d0d0" stroke-width="1.2"/>
<path d="M0 525.0L33.5 525.0" stroke="#d0d0d0" stroke-width="1.2"/>
<path d="M0 568.8L33.5 568.8" stroke="#d0d0d0" stroke-width="1.2"/>
<path d="M0 653.35L33.5 653.35" stroke="#d0d0d0" stroke-width="1.2"/>
<path d="M0 699.9L33.5 699.9" stroke="#d0d0d0" stroke-width="1.2"/>
<path d="M0 962.0L33.5 962.0" stroke="#d0d0d0" stroke-width="1.2"/>
<path d="M0 1037.7L33.5 1037.7" stroke="#d0d0d0" stroke-width="1.2"/>
<path d="M105.0 265.0L105.0 313.8" stroke="#06181c" stroke-width="1.0"/>
<path d="M433.6 265.0L433.6 313.8" stroke="#06181c" stroke-width="1.0"/>
<path d="M524.8 265.0L524.8 313.8" stroke="#06181c" stroke-width="1.0"/>
<path d="M1125.6 265.0L1125.6 313.8" stroke="#06181c" stroke-width="1.0"/>
<path d="M1317.0 265.0L1317.0 313.8" stroke="#06181c" stroke-width="1.0"/>
<path d="M1491.7 265.0L1491.7 313.8" stroke="#06181c" stroke-width="1.0"/>
<path d="M1572.0 265.0L1572.0 313.8" stroke="#06181c" stroke-width="1.0"/>
<path d="M1652.95 265.0L1652.95 313.8" stroke="#06181c" stroke-width="1.0"/>
<path d="M1792.6 265.0L1792.6 313.8" stroke="#1a5f6c" stroke-width="1.5"/>
<path d="M953.6999999999999 265.0L953.6999999999999 313.8" stroke="#1a5f6c" stroke-width="1.2"/>
<path d="M34.0 313.8L954.3 313.8" stroke="#0c0c0c" stroke-width="2.3"/>
<path d="M958.0 313.8L1793.3 313.8" stroke="#0c0c0c" stroke-width="2.3"/>
<path d="M105.0 319.0L105.0 1302" stroke="#000" stroke-width="1.02"/>
<path d="M433.6 319.0L433.6 1302" stroke="#000" stroke-width="1.02"/>
<path d="M524.8 319.0L524.8 1302" stroke="#000" stroke-width="1.02"/>
<path d="M953.9 319.0L953.9 1302" stroke="#000" stroke-width="1.02"/>
<path d="M1125.6 319.0L1125.6 1302" stroke="#000" stroke-width="1.02"/>
<path d="M1317.0 319.0L1317.0 1302" stroke="#000" stroke-width="1.02"/>
<path d="M1491.7 319.0L1491.7 1302" stroke="#000" stroke-width="1.02"/>
<path d="M1572.0 319.0L1572.0 1302" stroke="#000" stroke-width="1.02"/>
<path d="M1652.95 319.0L1652.95 1302" stroke="#000" stroke-width="1.02"/>
<path d="M1792.7 319.0L1792.7 1302" stroke="#000" stroke-width="1.95"/>
<path d="M433.6 401.5L953.9 401.5" stroke="#0a0a0a" stroke-width="1.05"/>
<path d="M958.0 401.5L1652.95 401.5" stroke="#0a0a0a" stroke-width="1.05"/>
<path d="M1652.95 401.05L1793.0 401.05" stroke="#000" stroke-width="1.95"/>
<path d="M433.6 460.2L953.9 460.2" stroke="#0a0a0a" stroke-width="1.05"/>
<path d="M958.0 460.2L1652.95 460.2" stroke="#0a0a0a" stroke-width="1.05"/>
<path d="M1652.95 459.75L1793.0 459.75" stroke="#000" stroke-width="1.95"/>
<path d="M433.6 568.8L953.9 568.8" stroke="#0a0a0a" stroke-width="1.05"/>
<path d="M958.0 568.8L1652.95 568.8" stroke="#0a0a0a" stroke-width="1.05"/>
<path d="M1652.95 568.3499999999999L1793.0 568.3499999999999" stroke="#000" stroke-width="1.95"/>
<path d="M433.6 653.35L953.9 653.35" stroke="#0a0a0a" stroke-width="1.05"/>
<path d="M958.0 653.35L1652.95 653.35" stroke="#0a0a0a" stroke-width="1.05"/>
<path d="M1652.95 652.9L1793.0 652.9" stroke="#000" stroke-width="1.95"/>
<path d="M433.6 962.0L953.9 962.0" stroke="#0a0a0a" stroke-width="1.05"/>
<path d="M958.0 962.0L1652.95 962.0" stroke="#0a0a0a" stroke-width="1.05"/>
<path d="M1652.95 961.55L1793.0 961.55" stroke="#000" stroke-width="1.95"/>
<path d="M34.0 525.0L954.3 525.0" stroke="#000" stroke-width="1.95"/>
<path d="M958.0 525.0L1793.0 525.0" stroke="#000" stroke-width="1.95"/>
<path d="M34.0 699.9L954.3 699.9" stroke="#000" stroke-width="1.95"/>
<path d="M958.0 699.9L1793.0 699.9" stroke="#000" stroke-width="1.95"/>
<path d="M34.0 1037.7L954.3 1037.7" stroke="#000" stroke-width="1.95"/>
<path d="M958.0 1037.7L1793.0 1037.7" stroke="#000" stroke-width="1.95"/>
</svg>
<svg style="left:0;top:0;width:1999px;height:1302px" viewBox="0 0 1999 1302"><rect x="0" y="314.900" width="1999" height="3.800" fill="#dde1ea"/><rect x="953.300" y="242" width="4.500" height="23" fill="#dde1ea"/><rect x="954.600" y="265" width="3.200" height="1037" fill="#dde1ea"/></svg>
<svg style="left:0;top:1301px;width:1999px;height:25px" viewBox="0 1301 1999 25"><rect x="0" y="1302" width="953.2" height="24" fill="#f8f8f8"/><rect x="957.800" y="1302" width="1042" height="24" fill="#fff"/><rect x="0" y="1301.9" width="1999" height="1.850" fill="#d4d4d4"/><rect x="953.200" y="1301.9" width="4.600" height="24" fill="#dde1ea"/><rect x="960" y="1306" width="1100" height="16.800" rx="8.400" fill="#dadce0"/></svg>
<div style="left:0;top:1325.500px;width:1999px;height:71px;background:#f1f3f4;border-top:1px solid #e4e6e8"></div>
<svg style="left:88px;top:1352.500px;width:19.500px;height:19.500px" viewBox="0 0 19.500 19.500"><path d="M8 0h3.500v8H19.500v3.500H11.500v8H8v-8H0V8h8z" fill="#5f6368"/></svg>
<svg style="left:145.500px;top:1351.500px;width:24px;height:21px" viewBox="0 0 24 21"><g fill="#5f6368"><rect y="0" width="24" height="3.400"/><rect y="5.900" width="24" height="3.400"/><rect y="11.700" width="24" height="3.400"/><rect y="17.600" width="24" height="3.400"/></g></svg>
<div style="left:196px;top:1326px;width:11px;height:70px;background:linear-gradient(90deg,#d2d4d6,#e9ebec 60%,#f1f3f4)"></div>
<div style="left:559.5px;top:1326px;width:1.500px;height:70px;background:#e2e4e6"></div>
<div style="left:205px;top:1393.700px;width:355.5px;height:2.300px;background:#e8709c"></div>
<div class="tab" id="tab0" style="left:232.5px;color:#5f6368;-webkit-text-stroke-color:#5f6368;letter-spacing:0.76px">4. Individuals' rights</div>
<svg style="left:514.5px;top:1358.800px;width:15px;height:7.500px" viewBox="0 0 10 5"><path d="M0 0h10L5 5z" fill="#80868b"/></svg>
<div style="left:864px;top:1326px;width:1.500px;height:70px;background:#e2e4e6"></div>
<div style="left:560.5px;top:1393.700px;width:304.5px;height:2.300px;background:#fbd85d"></div>
<div class="tab" id="tab1" style="left:592.5px;color:#5f6368;-webkit-text-stroke-color:#5f6368;letter-spacing:0.27px">5. Transparency</div>
<svg style="left:818px;top:1358.800px;width:15px;height:7.500px" viewBox="0 0 10 5"><path d="M0 0h10L5 5z" fill="#80868b"/></svg>
<div style="left:853px;top:1325.500px;width:435.5px;height:71px;overflow:hidden"><div style="left:12px;top:0;width:411.5px;height:80px;background:#fff;box-shadow:0 0 6px rgba(0,0,0,0.22)"></div></div>
<div style="left:865px;top:1393.700px;width:411.5px;height:2.300px;background:#26bcd7"></div>
<div class="tab" id="tab2" style="left:896.5px;color:#188038;-webkit-text-stroke-color:#188038;letter-spacing:0.24px">6 ROPA and lawful basis</div>
<svg style="left:1229.5px;top:1358.800px;width:15px;height:7.500px" viewBox="0 0 10 5"><path d="M0 0h10L5 5z" fill="#188038"/></svg>
<div style="left:1756.5px;top:1326px;width:1.500px;height:70px;background:#e2e4e6"></div>
<div style="left:1276.5px;top:1393.700px;width:481.0px;height:2.300px;background:#861c87"></div>
<div class="tab" id="tab3" style="left:1307px;color:#5f6368;-webkit-text-stroke-color:#5f6368;letter-spacing:0.51px">7. Contracts and data sharing</div>
<svg style="left:1711.5px;top:1358.800px;width:15px;height:7.500px" viewBox="0 0 10 5"><path d="M0 0h10L5 5z" fill="#80868b"/></svg>
<div style="left:2199px;top:1326px;width:1.500px;height:70px;background:#e2e4e6"></div>
<div style="left:1757.5px;top:1393.700px;width:442.5px;height:2.300px;background:#4a86c8"></div>
<div class="tab" id="tab4" style="left:1789.5px;color:#5f6368;-webkit-text-stroke-color:#5f6368;letter-spacing:-0.2px">8. Risks and DPIAs</div>
<svg style="left:2100px;top:1358.800px;width:15px;height:7.500px" viewBox="0 0 10 5"><path d="M0 0h10L5 5z" fill="#80868b"/></svg>
</div>
</body></html>
